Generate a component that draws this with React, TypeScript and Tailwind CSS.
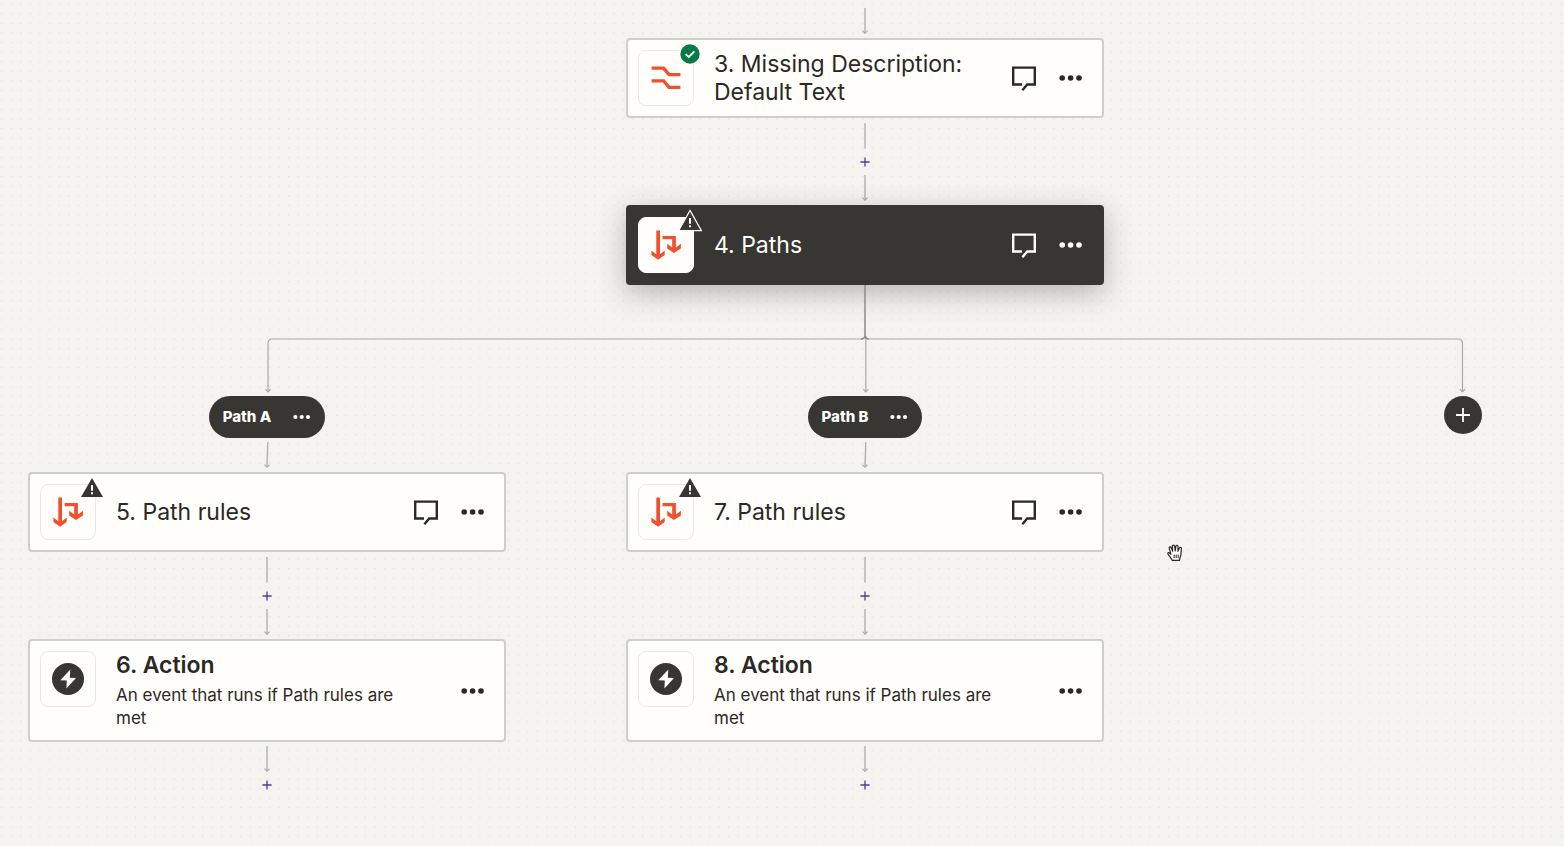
import React from "react";

type StepKind = "formatter" | "paths" | "action";
type StepStatus = "ok" | "warning";

interface Step {
  title: string;
  kind: StepKind;
  description?: string;
  status?: StepStatus;
  selected?: boolean;
}

interface Branch {
  name: string;
  steps: Step[];
}

const mainSteps: Step[] = [
  { title: "3. Missing Description: Default Text", kind: "formatter", status: "ok" },
  { title: "4. Paths", kind: "paths", status: "warning", selected: true },
];

const branches: Branch[] = [
  {
    name: "Path A",
    steps: [
      { title: "5. Path rules", kind: "paths", status: "warning" },
      { title: "6. Action", kind: "action", description: "An event that runs if Path rules are met" },
    ],
  },
  {
    name: "Path B",
    steps: [
      { title: "7. Path rules", kind: "paths", status: "warning" },
      { title: "8. Action", kind: "action", description: "An event that runs if Path rules are met" },
    ],
  },
];

const StepIcon: React.FC<{ kind: StepKind }> = ({ kind }) => {
  if (kind === "formatter") {
    return (
      <svg viewBox="0 0 32 32" className="size-8" fill="none" stroke="#f0502d" strokeWidth="3.3" aria-hidden="true">
        <path d="M1.6 6.1H13.6L19 12.6H30.4" />
        <path d="M1.6 18.8H13.6L19 25.3H30.4" />
      </svg>
    );
  }
  if (kind === "paths") {
    return (
      <svg viewBox="0 0 32 32" className="size-8" fill="#f0502d" aria-hidden="true">
        <path d="M6.3 1.6H10V25.2L14.7 21.4V26L8.1 30.7L1.4 26V21.4L6.3 25.2Z" />
        <path d="M12.6 6.9H25.9V18.6L30.9 14.8V19.4L24 24.1L17.2 19.4V14.8L22.2 18.6V10.3H12.6Z" />
      </svg>
    );
  }
  return (
    <svg viewBox="0 0 32 32" className="size-8" aria-hidden="true">
      <circle cx="16" cy="16" r="16" fill="#373633" />
      <path d="M18.3 6.5L8.3 17.2L14.8 17.4L14.4 25.6L24 15L17.8 14.8Z" fill="#fffefa" />
    </svg>
  );
};

const StatusBadge: React.FC<{ status: StepStatus; selected?: boolean }> = ({ status, selected }) => {
  if (status === "ok") {
    return (
      <svg viewBox="0 0 20 20" className="absolute -top-[7px] -right-[7px] size-5" aria-hidden="true">
        <circle cx="10" cy="10" r="9.7" fill="#067a47" />
        <path d="M5.6 10.2L8.8 13L14.4 7.4" fill="none" stroke="#fffefa" strokeWidth="1.8" />
      </svg>
    );
  }
  return (
    <svg viewBox="0 0 26 24" className="absolute -top-[9px] -right-[10px] h-6 w-[26px]" aria-hidden="true">
      <path
        d={selected ? "M13 1.4L24.4 21.6H1.6Z" : "M13 2L24 21H2Z"}
        fill="#373633"
        stroke={selected ? "#fffefa" : "none"}
        strokeWidth="1.2"
      />
      <path d="M12 9H14V14.8H12ZM12 16.2H14V18.2H12Z" fill="#fffefa" />
    </svg>
  );
};

const CommentIcon = () => (
  <svg viewBox="0 0 24 25" className="h-[25px] w-6" fill="none" stroke="currentColor" strokeWidth="2.4" aria-hidden="true">
    <path d="M10 18.5H1.2V1.6H22.8V18.5H15.2L10.4 24.2" />
  </svg>
);

const DotsIcon: React.FC<{ className: string }> = ({ className }) => (
  <svg viewBox="0 0 24 8" className={className} fill="currentColor" aria-hidden="true">
    <circle cx="3.2" cy="4" r="2.8" />
    <circle cx="11.6" cy="4" r="2.8" />
    <circle cx="20" cy="4" r="2.8" />
  </svg>
);

const Wire: React.FC<{ arrow?: boolean; slanted?: boolean }> = ({ arrow, slanted }) => (
  <svg viewBox="0 0 8 26" className="h-[26px] w-2" fill="none" stroke="#b0afab" strokeWidth="1.4" aria-hidden="true">
    <path d={slanted ? "M4.8 0L4 25" : "M4 0V25.5"} />
    {arrow && <path d="M1.4 22.6L4 25.2L6.6 22.6" strokeWidth="1.2" />}
  </svg>
);

const AddStepButton = () => (
  <button type="button" aria-label="Add step" className="flex size-[26px] items-center justify-center text-[#46418f]">
    <svg viewBox="0 0 10 10" className="size-[10px]" stroke="currentColor" strokeWidth="1.3" aria-hidden="true">
      <path d="M5 0.4V9.6M0.4 5H9.6" />
    </svg>
  </button>
);

const StepLink = () => (
  <div className="flex flex-col items-center pt-[5px] pb-1">
    <Wire />
    <AddStepButton />
    <Wire arrow />
  </div>
);

const StepCard: React.FC<{ step: Step }> = ({ step }) => {
  const { title, kind, description, status, selected } = step;
  return (
    <article
      className={`flex w-[478px] gap-5 rounded border-2 py-[10px] pr-[19px] pl-[10px] ${
        selected
          ? "border-[#373633] bg-[#373633] text-[#fffefa] shadow-[0_8px_28px_rgba(40,38,34,0.3)]"
          : "border-[#cfcecb] bg-[#fffefa] text-[#2a2926]"
      }`}
    >
      <div
        className={`relative flex size-14 shrink-0 items-center justify-center rounded-lg border bg-[#fffefa] ${
          selected ? "border-[#fffefa]" : "border-[#e9e8e5]"
        }`}
      >
        <StepIcon kind={kind} />
        {status && <StatusBadge status={status} selected={selected} />}
      </div>
      <div className="min-w-0 flex-1 self-center">
        <h2 className={`text-[23px] leading-7 ${description ? "font-semibold" : "font-normal"}`}>{title}</h2>
        {description && <p className="mt-[5px] text-[17px] leading-[23px]">{description}</p>}
      </div>
      <div className="flex w-[71px] shrink-0 items-center justify-end gap-[23px]">
        {!description && (
          <button type="button" aria-label="Comments">
            <CommentIcon />
          </button>
        )}
        <button type="button" aria-label="Step options">
          <DotsIcon className="h-2 w-6" />
        </button>
      </div>
    </article>
  );
};

// Splits the trunk into one arrow per branch, plus one for the add button
const BranchLines = () => (
  <svg viewBox="0 0 1794 111" className="h-[111px] w-full" fill="none" stroke="#aaa9a5" strokeWidth="1.2" aria-hidden="true">
    <path d="M894 54H304.5Q300 54 300 58.5V107" />
    <path d="M900 54H1490Q1494.5 54 1494.5 58.5V107" />
    <path d="M897.8 51V107" />
    <path d="M897 0V50Q897 54 893 54M897 50Q897 54 901 54" stroke="#8b8a87" strokeWidth="1.5" />
    <path d="M297.4 104.2L300 106.8L302.6 104.2M895.2 104.2L897.8 106.8L900.4 104.2M1491.9 104.2L1494.5 106.8L1497.1 104.2" />
  </svg>
);

const BranchPill: React.FC<{ name: string }> = ({ name }) => (
  <div className="flex h-[42px] items-center gap-[22px] rounded-full bg-[#373633] px-[14px] text-[#fffefa]">
    <h3 className="text-[15px] font-extrabold">{name}</h3>
    <button type="button" aria-label={`${name} options`}>
      <DotsIcon className="h-[6px] w-[18px]" />
    </button>
  </div>
);

const DotGrid = () => (
  <svg className="absolute inset-0 size-full" aria-hidden="true">
    <defs>
      <pattern id="dots" x="1.1" y="3.7" width="9.565" height="9.565" patternUnits="userSpaceOnUse">
        <circle cx="0.7" cy="0.7" r="0.6" fill="#d9d7d3" />
      </pattern>
    </defs>
    <rect width="100%" height="100%" fill="url(#dots)" />
  </svg>
);

const HandCursor = () => (
  <svg viewBox="0 0 16 18" className="absolute top-[544px] left-[1167px] h-[18px] w-4" aria-hidden="true">
    <path
      d="M5.2 16.4C4.6 14.2 1.6 11.6 0.9 9.7C0.6 8.6 1.9 8.1 2.7 9L4 10.4L2.3 4.3C1.9 2.8 3.7 2.3 4.2 3.7L5.7 7.2L5.3 2.3C5.2 0.8 7.2 0.6 7.5 2.1L8.2 6.8L8.9 2.2C9.1 0.8 11 1 11 2.5L10.9 7.3L12.3 4.2C12.9 2.9 14.7 3.5 14.4 4.9L13.9 10.5C13.7 12.7 12.7 13.5 12.4 16.4Z"
      fill="#ffffff"
      stroke="#2a2926"
      strokeWidth="1.2"
      strokeLinejoin="round"
    />
    <path d="M7.2 10.6V14M9.2 10.6V14M11.2 10.6V14" stroke="#2a2926" strokeWidth="1" />
  </svg>
);

const App: React.FC = () => {
  return (
    <main className="relative flex min-h-screen justify-center overflow-hidden bg-[#f5f3f0] pl-[166px] font-['Inter','Liberation_Sans',sans-serif]">
      <DotGrid />
      <div className="relative flex w-[1794px] shrink-0 flex-col items-center">
        <div className="pt-2 pb-1">
          <Wire arrow />
        </div>
        {mainSteps.map((step, i) => (
          <React.Fragment key={step.title}>
            {i > 0 && <StepLink />}
            <StepCard step={step} />
          </React.Fragment>
        ))}

        {/* Branches */}
        <BranchLines />
        <div className="grid w-full grid-cols-3">
          {branches.map((branch) => (
            <section key={branch.name} className="flex flex-col items-center">
              <BranchPill name={branch.name} />
              <div className="py-1">
                <Wire arrow slanted />
              </div>
              {branch.steps.map((step, i) => (
                <React.Fragment key={step.title}>
                  {i > 0 && <StepLink />}
                  <StepCard step={step} />
                </React.Fragment>
              ))}
              <div className="flex flex-col items-center pt-1">
                <Wire arrow />
                <AddStepButton />
              </div>
            </section>
          ))}
          <div className="flex items-start justify-center">
            <button
              type="button"
              aria-label="Add path"
              className="flex size-[38px] items-center justify-center rounded-full bg-[#373633] text-[#fffefa]"
            >
              <svg viewBox="0 0 14 14" className="size-[14px]" stroke="currentColor" strokeWidth="1.8" aria-hidden="true">
                <path d="M7 0V14M0 7H14" />
              </svg>
            </button>
          </div>
        </div>
      </div>
      <HandCursor />
    </main>
  );
};

export default App;
